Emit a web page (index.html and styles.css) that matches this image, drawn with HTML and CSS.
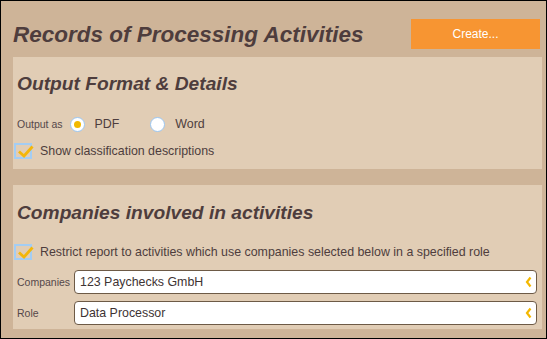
FILE: index.html
```
<!DOCTYPE html>
<html>
<head>
<meta charset="utf-8">
<title>Records of Processing Activities</title>
<link rel="stylesheet" href="styles.css">
</head>
<body>
<div class="frame">
  <div class="header">
    <h1 class="title">Records of Processing Activities</h1>
    <button class="create">Create...</button>
  </div>

  <div class="panel panel-output">
    <h2 class="section">Output Format &amp; Details</h2>
    <div class="row radios">
      <span class="small-label">Output as</span>
      <span class="radio checked"></span>
      <span class="opt">PDF</span>
      <span class="radio"></span>
      <span class="opt">Word</span>
    </div>
    <div class="row check-row">
      <span class="checkbox">
        <svg width="18" height="16" viewBox="0 0 18 16"><path d="M3 6.5 L8 11 L16.5 1.5" fill="none" stroke="#f4b60a" stroke-width="2.8"/></svg>
      </span>
      <span class="check-text">Show classification descriptions</span>
    </div>
  </div>

  <div class="panel panel-companies">
    <h2 class="section">Companies involved in activities</h2>
    <div class="row check-row">
      <span class="checkbox">
        <svg width="18" height="16" viewBox="0 0 18 16"><path d="M3 6.5 L8 11 L16.5 1.5" fill="none" stroke="#f4b60a" stroke-width="2.8"/></svg>
      </span>
      <span class="check-text">Restrict report to activities which use companies selected below in a specified role</span>
    </div>
    <div class="field">
      <span class="small-label field-label">Companies</span>
      <div class="select">
        <span>123 Paychecks GmbH</span>
        <svg class="chev" width="7" height="12" viewBox="0 0 7 12"><path d="M5.5 1.5 L2 6 L5.5 10.5" fill="none" stroke="#f4b800" stroke-width="2.2"/></svg>
      </div>
    </div>
    <div class="field">
      <span class="small-label field-label">Role</span>
      <div class="select">
        <span>Data Processor</span>
        <svg class="chev" width="7" height="12" viewBox="0 0 7 12"><path d="M5.5 1.5 L2 6 L5.5 10.5" fill="none" stroke="#f4b800" stroke-width="2.2"/></svg>
      </div>
    </div>
  </div>
</div>
</body>
</html>
```

FILE: styles.css
```
body {
  margin: 0;
  font-family: "Liberation Sans", Arial, sans-serif;
  color: #4e3d3d;
}

.frame {
  box-sizing: border-box;
  width: 547px;
  height: 339px;
  border: 1px solid #000;
  background-color: #ceb498;
  padding: 0 4px 0 12px;
}

.header {
  height: 56px;
  display: flex;
  justify-content: space-between;
}

.title {
  margin: 0;
  margin-top: 22px;
  font-size: 22.5px;
  line-height: 24px;
  font-weight: bold;
  font-style: italic;
  color: #4e3d3d;
  height: 24px;
}

.create {
  margin-top: 18px;
  margin-right: 2px;
  width: 129px;
  height: 30px;
  border: none;
  background-color: #f79532;
  color: #fff;
  font-family: "Liberation Sans", Arial, sans-serif;
  font-size: 12px;
  padding: 0;
}

.panel {
  background-color: #e1cdb5;
  padding-left: 1px;
}

.panel-output {
  height: 112px;
  margin-bottom: 16px;
}

.panel-companies {
  height: 144px;
}

.section {
  margin: 0;
  padding-left: 3px;
  font-size: 19.2px;
  line-height: 20px;
  font-weight: bold;
  font-style: italic;
  color: #4e3d3d;
}

.panel-output .section {
  padding-top: 17px;
}

.panel-companies .section {
  padding-top: 18px;
}

.row {
  display: flex;
  align-items: center;
}

.radios {
  margin-top: 22px;
  height: 16px;
}

.small-label {
  font-size: 10.5px;
  color: #55484a;
}

.radios .small-label {
  margin-left: 3px;
  margin-right: 7px;
}

.radio {
  box-sizing: border-box;
  width: 15px;
  height: 15px;
  border-radius: 50%;
  border: 1px solid #9ac6f2;
  background-color: #fff;
  display: flex;
  align-items: center;
  justify-content: center;
}

.radio.checked::after {
  content: "";
  width: 7px;
  height: 7px;
  border-radius: 50%;
  background-color: #f2b900;
}

.opt {
  font-size: 12.4px;
  margin-left: 10px;
  margin-right: 31px;
}

.check-row {
  height: 18px;
}

.panel-output .check-row {
  margin-top: 10px;
}

.panel-companies .check-row {
  margin-top: 20px;
}

.checkbox {
  position: relative;
  box-sizing: border-box;
  width: 18px;
  height: 16px;
  border: 2px solid #a3cdf4;
}

.checkbox svg {
  position: absolute;
  left: 0;
  top: 0;
}

.check-text {
  font-size: 12.4px;
  margin-left: 8px;
}

.field {
  display: flex;
  align-items: center;
  margin-top: 9px;
  height: 24px;
}

.field + .field {
  margin-top: 7px;
}

.field-label {
  width: 57px;
  padding-left: 3px;
}

.select {
  box-sizing: border-box;
  width: 463px;
  height: 24px;
  border: 1px solid #6d5a46;
  border-radius: 4px;
  background-color: #fff;
  display: flex;
  align-items: center;
  justify-content: space-between;
  padding: 0 4px 0 5px;
  font-size: 12.4px;
  color: #3e3333;
}

.chev {
  display: block;
}
```
